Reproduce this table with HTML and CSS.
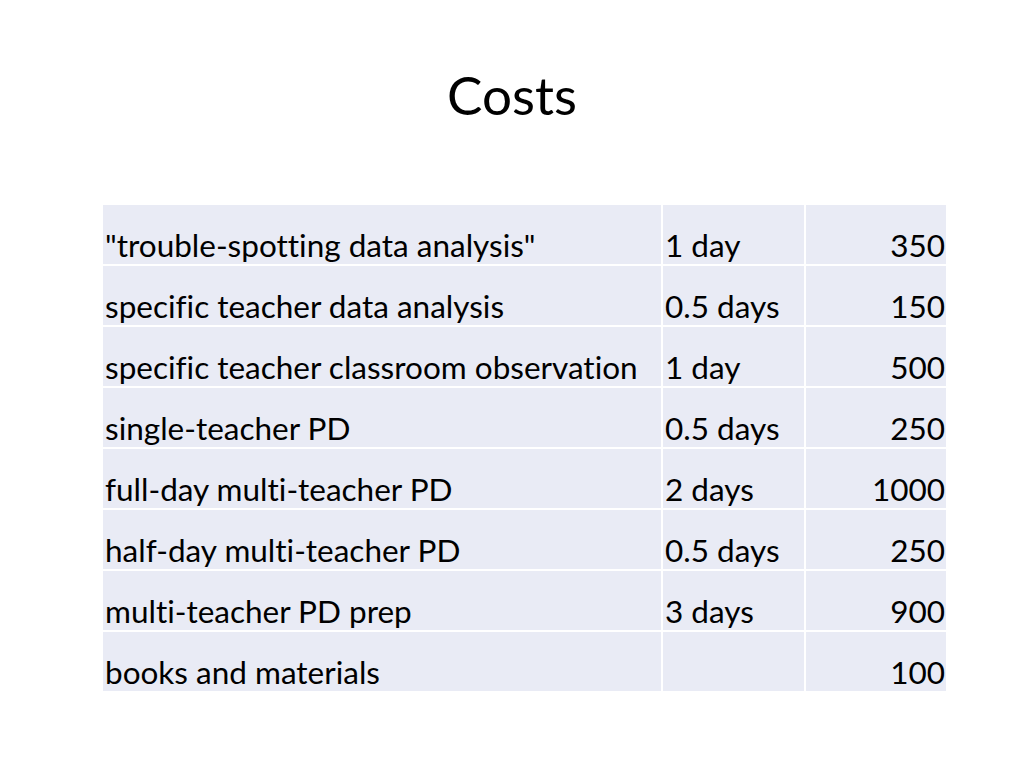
FILE: index.html
```html
<!DOCTYPE html>
<html lang="en">
<head>
<meta charset="utf-8">
<title>Costs</title>
<link rel="stylesheet" href="styles.css">
</head>
<body>
<main class="slide">
  <h1 class="title">Costs</h1>
  <div class="costs">
    <div class="cell">"trouble-spotting data analysis"</div><div class="cell">1 day</div><div class="cell num">350</div>
    <div class="cell">specific teacher data analysis</div><div class="cell">0.5 days</div><div class="cell num">150</div>
    <div class="cell">specific teacher classroom observation</div><div class="cell">1 day</div><div class="cell num">500</div>
    <div class="cell">single-teacher PD</div><div class="cell">0.5 days</div><div class="cell num">250</div>
    <div class="cell">full-day multi-teacher PD</div><div class="cell">2 days</div><div class="cell num">1000</div>
    <div class="cell">half-day multi-teacher PD</div><div class="cell">0.5 days</div><div class="cell num">250</div>
    <div class="cell">multi-teacher PD prep</div><div class="cell">3 days</div><div class="cell num">900</div>
    <div class="cell">books and materials</div><div class="cell"></div><div class="cell num">100</div>
  </div>
</main>
</body>
</html>
```
FILE: styles.css
```css
html, body {
  margin: 0;
  padding: 0;
  background: #ffffff;
}
.slide {
  width: 1024px;
  height: 768px;
  font-family: Lato, "Open Sans", sans-serif;
  font-variant-ligatures: none;
  color: #000000;
  padding-top: 68px;
  box-sizing: border-box;
}
.title {
  margin: 0;
  font-weight: 400;
  font-size: 53px;
  line-height: 1;
  text-align: center;
  height: 137px;
}
.costs {
  margin-left: 103px;
  display: grid;
  grid-template-columns: 558px 141px 140px;
  grid-auto-rows: 59px;
  gap: 2px;
  width: 843px;
}
.cell {
  background: #e9ebf5;
  font-size: 31.5px;
  line-height: 1;
  padding: 25px 1px 0 2px;
  white-space: nowrap;
  box-sizing: border-box;
}
.num {
  text-align: right;
}
```
